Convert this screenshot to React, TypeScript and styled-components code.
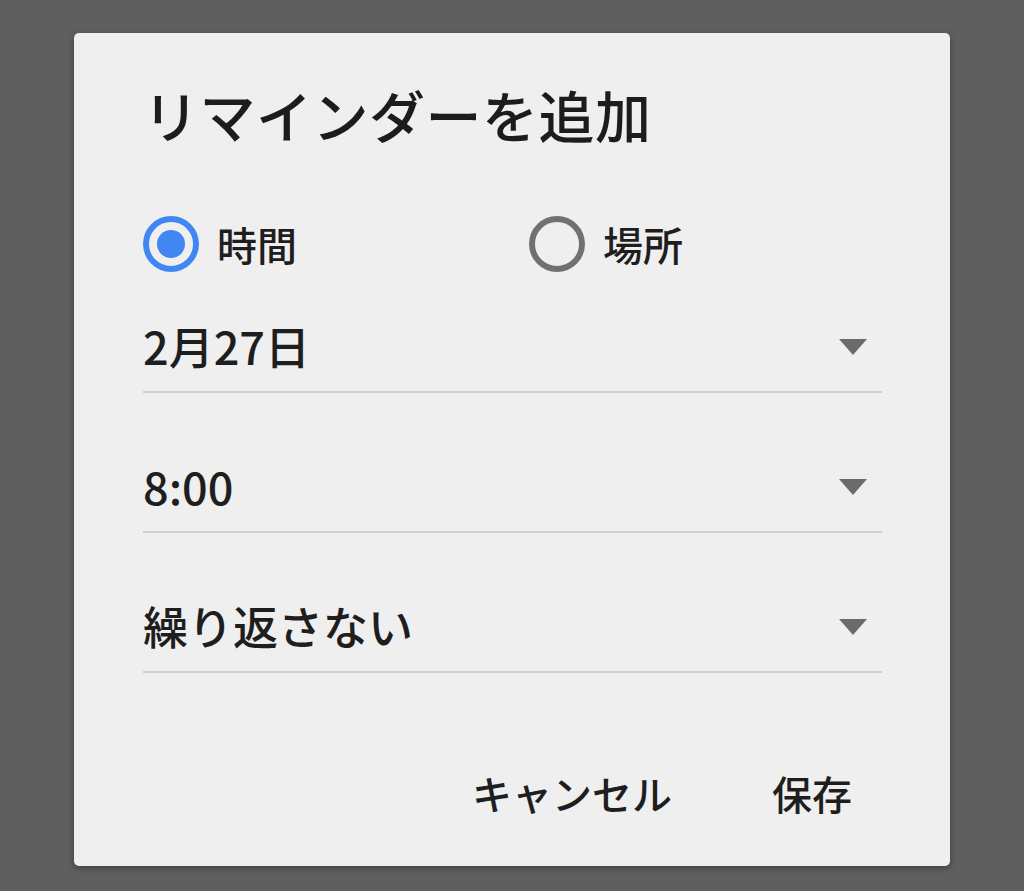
import styled, { createGlobalStyle } from "styled-components";

const GlobalStyle = createGlobalStyle`
  html, body {
    margin: 0;
    padding: 0;
    background: #5f5f5f;
  }
  body {
    font-family: "Noto Sans CJK JP", "Noto Sans", sans-serif;
    color: #1e1e1e;
  }
`;

const Backdrop = styled.div`
  width: 1024px;
  height: 891px;
  display: flex;
  justify-content: center;
  padding-top: 33px;
  box-sizing: border-box;
`;

const Dialog = styled.div`
  width: 876px;
  height: 833px;
  box-sizing: border-box;
  background: #efefef;
  border-radius: 5px;
  box-shadow: 0 2px 6px rgba(0, 0, 0, 0.35);
  padding: 41px 68px 0 69px;
  display: flex;
  flex-direction: column;
`;

const Title = styled.h1`
  margin: 0;
  height: 80px;
  line-height: 80px;
  font-size: 56px;
  font-weight: 500;
  color: #1c1c1c;
  letter-spacing: 0.5px;
`;

const RadioRow = styled.div`
  margin-top: 50px;
  height: 80px;
  display: grid;
  grid-template-columns: 386px 1fr;
  align-items: center;
`;

const RadioOption = styled.label`
  display: flex;
  align-items: center;
  gap: 18px;
  font-size: 40px;
  font-weight: 500;
  color: #1e1e1e;
`;

const RadioCircle = styled.span<{ $checked?: boolean }>`
  width: 56px;
  height: 56px;
  box-sizing: border-box;
  border-radius: 50%;
  border: 6px solid ${(p) => (p.$checked ? "#4286f3" : "#717171")};
  display: flex;
  align-items: center;
  justify-content: center;

  &::after {
    content: "";
    width: 28px;
    height: 28px;
    border-radius: 50%;
    background: ${(p) => (p.$checked ? "#4286f3" : "transparent")};
  }
`;

const Field = styled.div<{ $first?: boolean }>`
  margin-top: ${(p) => (p.$first ? "33px" : "64px")};
  padding-bottom: 14px;
  border-bottom: 2px solid #cfcfcf;
  display: flex;
  align-items: center;
  justify-content: space-between;
`;

const FieldValue = styled.span`
  height: 60px;
  line-height: 58px;
  font-size: 45px;
  font-weight: 500;
  color: #1e1e1e;
`;

const Arrow = styled.span`
  width: 0;
  height: 0;
  margin-right: 15px;
  border-left: 14px solid transparent;
  border-right: 14px solid transparent;
  border-top: 16px solid #6b6b6b;
`;

const ButtonRow = styled.div`
  margin-top: 90px;
  display: flex;
  justify-content: flex-end;
  gap: 68px;
  padding-right: 14px;
`;

const TextButton = styled.button`
  background: none;
  border: none;
  padding: 0 16px;
  height: 60px;
  line-height: 58px;
  font-family: inherit;
  font-size: 40px;
  font-weight: 500;
  color: #1e1e1e;
  cursor: pointer;
`;

const fields = ["2月27日", "8:00", "繰り返さない"];

export default function App() {
  return (
    <>
      <GlobalStyle />
      <Backdrop>
        <Dialog>
          <Title>リマインダーを追加</Title>
          <RadioRow>
            <RadioOption>
              <RadioCircle $checked />
              時間
            </RadioOption>
            <RadioOption>
              <RadioCircle />
              場所
            </RadioOption>
          </RadioRow>
          {fields.map((f, i) => (
            <Field key={f} $first={i === 0}>
              <FieldValue>{f}</FieldValue>
              <Arrow />
            </Field>
          ))}
          <ButtonRow>
            <TextButton>キャンセル</TextButton>
            <TextButton>保存</TextButton>
          </ButtonRow>
        </Dialog>
      </Backdrop>
    </>
  );
}
